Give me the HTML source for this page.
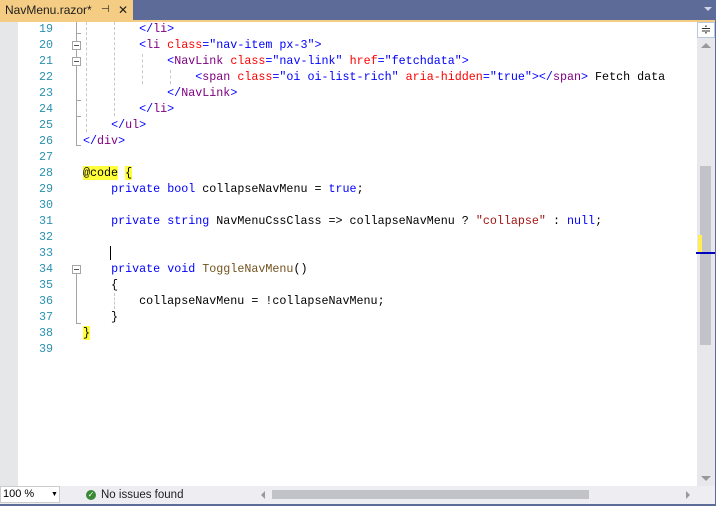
<!DOCTYPE html><html><head><style>
body{margin:0;width:716px;height:506px;overflow:hidden;background:#fff;position:relative;font-family:"Liberation Sans",sans-serif}
.a{position:absolute}
.ln{position:absolute;left:18px;width:35px;text-align:right;color:#2b91af;font:11.7px/16px "Liberation Mono",monospace}
.c{position:absolute;left:83px;white-space:pre;font:11.7px/16px "Liberation Mono",monospace;color:#000}
.t{color:#800080}.at{color:#ff0000}.s{color:#0000ff}.k{color:#0000ff}.m{color:#74531f}.hl{background:#ffff3a}.pu{color:#a31515}
.fb{position:absolute;left:72px;width:7px;height:7px;border:1px solid #a5a5a5;background:#fff}
.fb:after{content:"";position:absolute;left:1px;top:3px;width:5px;height:1px;background:#555}
.vl{position:absolute;left:76px;width:1px;background:#a5a5a5}
.dg{position:absolute;width:0;border-left:1px dashed #c8c8c8}
</style></head><body>
<div class="a" style="left:0;top:0;width:716px;height:20px;background:#5d6b99"></div>
<div class="a" style="left:0;top:0;width:133px;height:20px;background:#f5cc84;font-size:12px;line-height:20px;color:#1e1e1e"><span style="margin-left:5px">NavMenu.razor*</span><span style="position:absolute;left:101px;font-size:10px">⊣</span><span style="position:absolute;left:118px">✕</span></div>
<div class="a" style="left:704px;top:7px;width:0;height:0;border:4px solid transparent;border-top:4px solid #d0d6e8"></div>
<div class="a" style="left:0;top:20px;width:716px;height:2px;background:#f5cc84"></div>
<div class="a" style="left:0;top:22px;width:18px;height:464px;background:#e6e7e8"></div>
<div class="a" style="left:697px;top:22px;width:19px;height:464px;background:#e8e8ec"></div>
<div class="a" style="left:697px;top:22px;width:18px;height:16px;background:#fff;border:1px solid #b8c8e0;box-sizing:border-box;text-align:center;font-size:13px;line-height:14px;color:#333">≑</div>
<div class="a" style="left:701px;top:43px;border:5px solid transparent;border-bottom:5px solid #999;border-top:0"></div>
<div class="a" style="left:700px;top:166px;width:11px;height:179px;background:#c2c3c9"></div>
<div class="a" style="left:698px;top:235px;width:4px;height:18px;background:#ffee55"></div>
<div class="a" style="left:696px;top:252px;width:20px;height:2px;background:#0000c0"></div>
<div class="a" style="left:701px;top:476px;border:5px solid transparent;border-top:5px solid #999;border-bottom:0"></div>
<div class="a" style="left:0;top:486px;width:716px;height:18px;background:#eeeef2"></div>
<div class="a" style="left:0;top:486px;width:60px;height:17px;background:#fff;border:1px solid #ccc;box-sizing:border-box;font-size:11px;line-height:15px;padding-left:2px">100 %<span style="position:absolute;left:50px;font-size:7px">▼</span></div>
<div class="a" style="left:86px;top:490px;width:10px;height:10px;border-radius:50%;background:#388a34;color:#fff;font-size:8px;line-height:10px;text-align:center">✓</div>
<div class="a" style="left:101px;top:486px;font-size:11.5px;line-height:18px;color:#1e1e1e">No issues found</div>
<div class="a" style="left:261px;top:491px;border:4px solid transparent;border-right:4px solid #999;border-left:0"></div>
<div class="a" style="left:272px;top:490px;width:317px;height:9px;background:#c2c3c9"></div>
<div class="a" style="left:686px;top:491px;border:4px solid transparent;border-left:4px solid #999;border-right:0"></div>
<div class="a" style="left:0;top:504px;width:716px;height:2px;background:#5d6b99"></div>
<div class="a" style="left:715px;top:20px;width:1px;height:486px;background:#5d6b99"></div>

<div class="ln" style="top:21px">19</div><div class="ln" style="top:37px">20</div><div class="ln" style="top:53px">21</div><div class="ln" style="top:69px">22</div><div class="ln" style="top:85px">23</div><div class="ln" style="top:101px">24</div><div class="ln" style="top:117px">25</div><div class="ln" style="top:133px">26</div><div class="ln" style="top:149px">27</div><div class="ln" style="top:165px">28</div><div class="ln" style="top:181px">29</div><div class="ln" style="top:197px">30</div><div class="ln" style="top:213px">31</div><div class="ln" style="top:229px">32</div><div class="ln" style="top:245px">33</div><div class="ln" style="top:261px">34</div><div class="ln" style="top:277px">35</div><div class="ln" style="top:293px">36</div><div class="ln" style="top:309px">37</div><div class="ln" style="top:325px">38</div><div class="ln" style="top:341px">39</div>

<div class="vl" style="top:22px;height:124px"></div>
<div class="a" style="left:76px;top:145px;width:5px;height:1px;background:#a5a5a5"></div>
<div class="a" style="left:76px;top:33px;width:5px;height:1px;background:#a5a5a5"></div>
<div class="a" style="left:76px;top:116px;width:5px;height:1px;background:#a5a5a5"></div>
<div class="a" style="left:76px;top:100px;width:5px;height:1px;background:#a5a5a5"></div>
<div class="fb" style="top:41px"></div><div class="fb" style="top:57px"></div>
<div class="vl" style="top:273px;height:50px"></div>
<div class="a" style="left:76px;top:323px;width:5px;height:1px;background:#a5a5a5"></div>
<div class="fb" style="top:265px"></div>
<div class="dg" style="left:86px;top:22px;height:110px"></div>
<div class="dg" style="left:114px;top:22px;height:94px"></div>
<div class="dg" style="left:142px;top:54px;height:30px"></div>
<div class="dg" style="left:170px;top:70px;height:14px"></div>
<div class="dg" style="left:114px;top:293px;height:16px"></div>

<div class="c" style="top:21px">        <span class="s">&lt;/</span><span class="t">li</span><span class="s">&gt;</span></div>
<div class="c" style="top:37px">        <span class="s">&lt;</span><span class="t">li</span> <span class="at">class</span><span class="s">="nav-item px-3"&gt;</span></div>
<div class="c" style="top:53px">            <span class="s">&lt;</span><span class="t">NavLink</span> <span class="at">class</span><span class="s">="nav-link"</span> <span class="at">href</span><span class="s">="fetchdata"&gt;</span></div>
<div class="c" style="top:69px">                <span class="s">&lt;</span><span class="t">span</span> <span class="at">class</span><span class="s">="oi oi-list-rich"</span> <span class="at">aria-hidden</span><span class="s">="true"&gt;&lt;/</span><span class="t">span</span><span class="s">&gt;</span> Fetch data</div>
<div class="c" style="top:85px">            <span class="s">&lt;/</span><span class="t">NavLink</span><span class="s">&gt;</span></div>
<div class="c" style="top:101px">        <span class="s">&lt;/</span><span class="t">li</span><span class="s">&gt;</span></div>
<div class="c" style="top:117px">    <span class="s">&lt;/</span><span class="t">ul</span><span class="s">&gt;</span></div>
<div class="c" style="top:133px"><span class="s">&lt;/</span><span class="t">div</span><span class="s">&gt;</span></div>
<div class="c" style="top:165px"><span class="hl">@code</span> <span class="hl">{</span></div>
<div class="c" style="top:181px">    <span class="k">private</span> <span class="k">bool</span> collapseNavMenu = <span class="k">true</span>;</div>
<div class="c" style="top:213px">    <span class="k">private</span> <span class="k">string</span> NavMenuCssClass =&gt; collapseNavMenu ? <span class="pu">"collapse"</span> : <span class="k">null</span>;</div>
<div class="a" style="left:110px;top:246px;width:1px;height:14px;background:#000"></div>
<div class="c" style="top:261px">    <span class="k">private</span> <span class="k">void</span> <span class="m">ToggleNavMenu</span>()</div>
<div class="c" style="top:277px">    {</div>
<div class="c" style="top:293px">        collapseNavMenu = !collapseNavMenu;</div>
<div class="c" style="top:309px">    }</div>
<div class="c" style="top:325px"><span class="hl">}</span></div>
</body></html>
